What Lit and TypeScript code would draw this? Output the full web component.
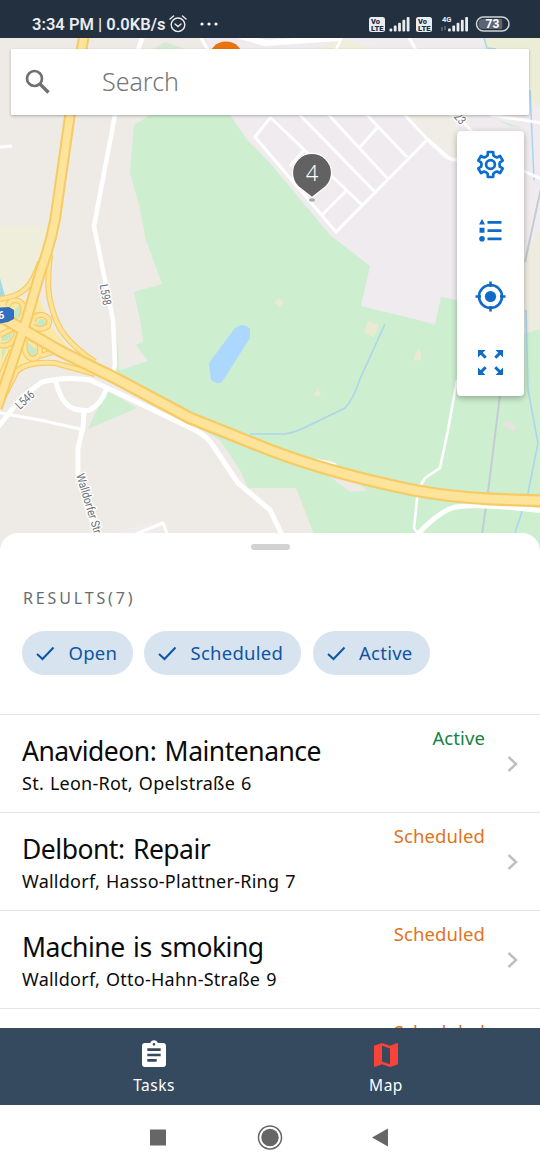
import { LitElement, html, css, svg } from "lit";
import { customElement, property } from "lit/decorators.js";

@customElement("map-canvas")
class MapCanvas extends LitElement {
  static styles = css`
    :host { display: block; }
    .map { display: block; width: 540px; height: 512px; }
    .lbl { font: 12px Roboto, sans-serif; fill: #6d7078; stroke: #fff; stroke-width: 3px; paint-order: stroke; stroke-linejoin: round; }
    .shield { font: bold 11px Roboto, sans-serif; fill: #fff; }
    .num { font: 300 22px "Noto Sans", sans-serif; fill: #fff; }
    .case { stroke: #f6cb64; fill: none; }
    .core { stroke: #fee39a; fill: none; }
    .road { stroke: #fff; fill: none; stroke-linejoin: round; }
    .water { stroke: #acd6ee; fill: none; stroke-width: 1.6px; }
  `;
  render() {
    const ramps = "M50 255C47 285 48 296 52 308C57 328 66 342 95 362 M40 262C32 286 24 296 0 299 M8 306Q10 298 19 301Q27 306 21 318 M0 345Q10 348 16 336 Q18 326 8 324 M33 322Q34 314 43 315Q52 318 48 326Q40 332 32 326 M25 340Q23 356 32 359Q43 358 39 343L30 338 M0 404L17 371Q28 361 55 363L95 374 M40 356L60 350 M0 335L14 328 M0 378L12 350";
    const a5 = "M84 36L70 115L55 220Q50 246 41 270L25 325L-3 408";
    const a6 = "M-5 313L17 326L60 351L117 379L190 418L270 450Q330 473 413 490Q450 497 490 499L545 501";
    return html`<svg class="map" viewBox="0 38 540 512">
      ${svg`
      <rect y="38" width="540" height="512" fill="#eeebe7"/>
      <path d="M0 226H50L38 280L20 300H0Z" fill="#eeeedb"/>
      <path d="M0 278L5 296H0Z" fill="#a5d8e4"/>
      <path d="M207 38H540V330L450 330L361 306L370 266L330 240L230 115Z" fill="#f0ebef"/>
      <path d="M403 113L427 139L447 159H458V115Z" fill="#efede5"/>
      <path d="M484 38H540V108L500 70L484 50Z" fill="#ebedd7"/>
      <path d="M153 49L165 42L185 49Z M320 49Q335 38 362 49Z" fill="#d6ead1"/>
      <path d="M320 49Q335 39 348 40L375 49Z" fill="#eeeedb"/>
      <path d="M150 115H230L247 140L270 163L330 235L370 266L361 306L435 324L441 297L457 300L540 330V550H320L296 488H248L240 470L220 440L190 422L118 375L117 371L148 361L136 345L143 342L141 325L134 292L162 284L146 240L139 205L130 173L134 125Z" fill="#cdeecf"/>
      <path d="M106 390L137 408L88 429Z M118 340L119 372H115Z M497 120L520 127L510 126Z" fill="#cdeecf"/>
      <path d="M540 229L524 255V334L540 329Z" fill="#eeebdf"/>
      <path d="M235 328Q243 322 250 329V338L222 382Q217 385 211 380L209 363Z" fill="#acd7ff"/>
      <path d="M274 302L279 298L284 302L280 308Z M365 330L368 321L379 325L374 337L364 333Z M414 358L418 348L421 352V360L415 361Z M314 396L318 387L321 396Z" fill="#e9ead1"/>
      <path d="M502 425L506 421L517 426L513 431Z" fill="#e8e3e0"/>
      <path d="M310 460L331 460L343 470L368 491L350 492L338 483Z" fill="#ede9e5"/>
      <path d="M418 320L436 323L434 325Z" fill="#ede6e8"/>
      <path d="M120 530L160 521L166 550H110Z" fill="#f0ebef"/>
      <path d="M250 434H285Q297 432 310 425L345 408Q353 400 360 379L385 324" class="water"/>
      <path d="M526 310L528 390L538 443L528 493L515 533" class="water"/>
      <path d="M484 38L487 48L496 49M534 180L530 90" class="water"/>
      <path d="M541 188L525 262M500 395L488 492L482 535" stroke="#c4cbd3" stroke-width="2" fill="none"/>
      <path class="road" stroke-width="3" d="M270 118L255 137L336 232L427 140M270 117L362 205M298 113L375 192M327 113L387 178M365 113L407 157M403 113L427 139M322 215L347 190M360 147L377 128M290 166L304 150M524 171L541 179M490 115L541 123M455 113L475 135"/>
      <path class="road" stroke-width="4" d="M427 139L447 157Q451 160 460 160"/>
      <path class="road" stroke-width="3" d="M200 36L208 50M408 36L416 50M342 36L336 50M0 147L12 146M0 413L40 420L80 429M136 534L163 523L168 536"/>
      <path class="road" stroke-width="6" d="M240 36L265 43Q310 40 340 38"/>
      <path class="road" stroke-width="2.6" d="M457 380L448 430L440 468L425 478L418 490L414 528L418 534"/>
      <path class="road" stroke-width="4.5" d="M143 36L115 115L94 226L113 320L115 365L111 380"/>
      <path class="road" stroke-width="5" d="M-2 427L22 397L42 382Q65 376 90 380L120 394L195 430Q205 435 212 444L238 483L270 510L282 535M56 382Q60 400 70 407Q80 412 90 410Q102 403 106 390M84 411L83 427L78 448L78 474L98 540"/>
      <path class="road" stroke-width="5" d="M416 536Q440 510 456 507Q480 503 545 511M315 461L336 466"/>
      <path d="M0 300L40 300L52 328L70 350L28 360L0 400Z" fill="#fbe8a5"/>
      <path d="M13 313Q18 304 22 306L20 318L12 321Z M1 333L12 331Q14 341 2 341Z M36 325Q38 318 43 319Q49 322 44 326L39 328Z M27 342L37 350Q35 359 30 357Q25 352 27 342Z M42 351L49 355L40 359Z M21 366L26 362L19 369Z M2 350L6 348L2 360Z" fill="#c5e8c6"/>
      <path class="case" stroke-width="6" d=${ramps}/><path class="core" stroke-width="3.600" d=${ramps}/>
      <path class="case" stroke-width="11.5" d=${a5}/><path class="case" stroke-width="13" d=${a6}/>
      <path class="core" stroke-width="7.500" d=${a5}/><path class="core" stroke-width="8.500" d=${a6}/>
      <path d="M-8 308L9 307L14 310V319L8 322L-8 325Z" fill="#3270bd"/>
      <text class="shield" x="-2" y="319">6</text>
      <text class="lbl" textLength="21" lengthAdjust="spacingAndGlyphs" transform="translate(99.5 285) rotate(80)">L598</text>
      <text class="lbl" textLength="21" lengthAdjust="spacingAndGlyphs" transform="translate(20 410) rotate(-43)">L546</text>
      <text class="lbl" textLength="62" lengthAdjust="spacingAndGlyphs" transform="translate(76 475) rotate(73)">Walldorfer Str</text>
      <text class="lbl" textLength="22" lengthAdjust="spacingAndGlyphs" transform="translate(446 109) rotate(48)">L723</text>
      <circle cx="226" cy="59" r="17.5" fill="#e9730c"/>
      <ellipse cx="312" cy="200" rx="3" ry="1.7" fill="#aaa"/>
      <path d="M312 197.500L298 186.500A19.500 19.500 0 1 1 326 186.500Z" fill="#626262" stroke="#fff" stroke-width="1.2"/>
      <text class="num" x="312" y="181" text-anchor="middle">4</text>
      `}
    </svg>`;
  }
}

@customElement("status-bar")
class StatusBar extends LitElement {
  static styles = css`
    :host { display: flex; height: 38px; box-sizing: border-box; padding: 10px 30px 0 32px; background: #23303f; color: #e9edf1; justify-content: space-between; font-family: Roboto, sans-serif; }
    .left { display: flex; }
    .time { font-size: 16.500px; font-weight: 600; line-height: 29px; width: 135px; white-space: nowrap; letter-spacing: 0; }
    .alarm { margin: 5px 0 0 2px; width: 18px; height: 18px; }
    .dots { margin: 12px 0 0 13px; width: 19px; height: 4px; }
    .signal { width: 144px; height: 28px; }
    .tiny { font: 900 7.500px Roboto, sans-serif; fill: #23303f; }
    .net { font: bold 7.500px Roboto, sans-serif; fill: #e9edf1; }
    .pct { font: bold 12px Roboto, sans-serif; fill: #fff; }
  `;
  bars(x: number) {
    return [0, 1, 2, 3, 4].map(i => svg`<rect x=${x + i * 4.3} y=${18.5 - i * 2.9} width="2.800" height=${3 + i * 2.9} rx="1" fill="#e9edf1"/>`);
  }
  volte(x: number) {
    return svg`<rect x=${x} y="7" width="16" height="15" rx="2.500" fill="#e9edf1"/>
      <text class="tiny" x=${x + 2} y="14" textLength="9" lengthAdjust="spacingAndGlyphs">Vo</text>
      <text class="tiny" x=${x + 2} y="20.800" textLength="12.500" lengthAdjust="spacingAndGlyphs">LTE</text>`;
  }
  render() {
    return html`<div class="left"><span class="time">3:34 PM | 0.0KB/s</span>
      <svg class="alarm" viewBox="0 0 18 18" fill="none" stroke="#e9edf1" stroke-width="1.4" stroke-linecap="round"><circle cx="9" cy="9.800" r="6.800"/><path d="M6 9L9 11.500L12 9M1 4L4.500 1M17 4L13.500 1"/></svg>
      <svg class="dots" viewBox="0 0 19 4" fill="#fff"><circle cx="2" cy="2" r="1.600"/><circle cx="9" cy="2" r="1.600"/><circle cx="16" cy="2" r="1.600"/></svg></div>
      <svg class="signal" viewBox="0 0 144 28">${this.volte(3)}${this.bars(23.5)}${this.volte(50)}${this.bars(82)}
        <text class="net" x="76" y="12">4G</text><path d="M76 17V21M79 20V16" stroke="#7e8994" stroke-width="1"/>
        <rect x="110.500" y="7" width="32.500" height="14" rx="7" fill="#23303f" stroke="#cfd4da" stroke-width="1.500"/><path d="M117 9H136Q137 14 136 19H117Q112.500 19 112.500 14T117 9Z" fill="#5c6673"/>
        <text class="pct" x="126.500" y="18.300" text-anchor="middle">73</text></svg>`;
  }
}

@customElement("filter-chip")
class FilterChip extends LitElement {
  @property() label = "";
  @property({ type: Number }) w = 0;
  static styles = css`
    .chip { display: flex; align-items: center; box-sizing: border-box; height: 44px; border-radius: 22px; background: #d7e3ef; color: #0f55a5; padding-left: 14px; gap: 13.500px; font: 18.500px/44px "Noto Sans", sans-serif; letter-spacing: 0.25px; }
    .tick { width: 19px; height: 15px; }
  `;
  render() {
    return html`<div class="chip" style="width:${this.w}px"><svg class="tick" viewBox="0 0 19 15" fill="none" stroke="#0f55a5" stroke-width="2"><path d="M1 8L6.500 13L17.500 1.500"/></svg><span>${this.label}</span></div>`;
  }
}

@customElement("task-row")
class TaskRow extends LitElement {
  @property() name = "";
  @property() place = "";
  @property() status = "";
  static styles = css`
    :host { display: block; font-family: "Noto Sans", sans-serif; color: #0b0b0b; }
    .row { display: flex; justify-content: space-between; box-sizing: border-box; height: 98px; border-top: 1px solid #e5e5e5; padding: 0 21px 0 22px; }
    .name { font-size: 26.500px; line-height: 34px; margin-top: 19px; white-space: nowrap; letter-spacing: -0.500px; word-spacing: 2px; }
    .place { font-size: 18px; line-height: 24px; margin-top: 3px; white-space: nowrap; letter-spacing: 0.250px; word-spacing: 1px; }
    .side { display: flex; }
    .status { font-size: 18.500px; line-height: 24px; margin-top: 10.500px; letter-spacing: 0.1px; color: #e0741b; }
    .active { color: #168244; }
    .arrow { width: 12px; height: 18px; margin: 40px 0 0 22px; }
  `;
  render() {
    return html`<div class="row"><div><div class="name">${this.name}</div><div class="place">${this.place}</div></div>
      <div class="side"><span class="status ${this.status === "Active" ? "active" : ""}">${this.status}</span>
      <svg class="arrow" viewBox="0 0 12 18" fill="none" stroke="#bfbfbf" stroke-width="2.500"><path d="M1.500 2L9 9L1.500 16"/></svg></div></div>`;
  }
}

@customElement("app-root")
class AppRoot extends LitElement {
  static styles = css`
    :host { display: flex; flex-direction: column; width: 540px; height: 1170px; overflow: hidden; background: #fff; font-family: Roboto, sans-serif; }
    .stage { position: relative; height: 495px; flex: none; }
    .search { position: absolute; left: 11px; top: 11px; width: 518px; height: 66px; background: #fff; box-shadow: 0 1px 3px rgba(0,0,0,.28); display: flex; align-items: center; box-sizing: border-box; padding-left: 13px; gap: 50px; border-radius: 1px; }
    .glass { width: 28px; height: 28px; }
    .hint { font: 300 25px/34px "Noto Sans", sans-serif; color: #757575; letter-spacing: 0; padding-bottom: 2px; }
    .tools { position: absolute; left: 457px; top: 93px; width: 67px; height: 265px; background: #fff; border-radius: 4px; box-shadow: 0 2px 6px rgba(0,0,0,.3); display: flex; flex-direction: column; align-items: center; }
    .tool { width: 32px; height: 32px; margin: 17px 0; }
    .sheet { position: relative; flex: none; height: 495px; background: #fff; border-radius: 18px 18px 0 0; overflow: hidden; }
    .grip { width: 39px; height: 6px; border-radius: 3px; background: #d2d2d2; margin: 11px auto 0; }
    .heading { font-family: "Noto Sans", sans-serif; font-size: 16px; line-height: 20px; letter-spacing: 2.850px; color: #6a6d70; margin: 38px 0 0 23px; }
    .chips { display: flex; gap: 11.500px; margin: 23px 0 39px 22px; }
    .tabs { flex: none; height: 77px; background: #354a5f; display: flex; padding: 0 38px; color: #fff; }
    .tab { flex: 1; display: flex; flex-direction: column; align-items: center; font: 15.500px/20px "Noto Sans", sans-serif; letter-spacing: .5px; padding-top: 11px; }
    .tabicon { width: 32px; height: 32px; margin-bottom: 4px; }
    .system { height: 65px; display: flex; }
    .sys { width: 540px; height: 65px; }
  `;
  gear() {
    const pts: string[] = [];
    for (let i = 0; i < 6; i++) {
      const at = (deg: number, r: number) => {
        const a = ((i * 60 + deg - 90) * Math.PI) / 180;
        return `${(15.5 + r * Math.cos(a)).toFixed(2)} ${(16.5 + r * Math.sin(a)).toFixed(2)}`;
      };
      pts.push(at(-17, 9.6), at(-12, 12.8), at(12, 12.8), at(17, 9.6), at(30, 9));
    }
    return svg`<path d="M${pts.join("L")}Z"/><circle cx="15.500" cy="16.500" r="4.400"/>`;
  }
  render() {
    return html`<status-bar></status-bar>
      <div class="stage"><map-canvas></map-canvas>
        <div class="search"><svg class="glass" viewBox="0 0 28 28" fill="none" stroke="#707070"><circle cx="10.500" cy="10.500" r="7.500" stroke-width="2.700"/><path d="M16 16L24.500 24.500" stroke-width="3.400"/></svg><span class="hint">Search</span></div>
        <div class="tools">
          <svg class="tool" viewBox="0 0 32 32" fill="none" stroke="#0a6ed1" stroke-width="2.700" stroke-linejoin="round">${this.gear()}</svg>
          <svg class="tool" viewBox="0 0 32 32" fill="#0f6bc8"><path d="M7 5L10 10.500H4ZM4.500 13.700H9.500V18.700H4.500ZM12.500 7H26.500V9.800H12.500ZM12.500 15.200H26.500V18H12.500ZM12.500 23.500H26.500V26.300H12.500Z"/><circle cx="7" cy="24.800" r="2.800"/></svg>
          <svg class="tool" viewBox="0 0 32 32" fill="none" stroke="#0f6bc8" stroke-width="2.600"><circle cx="15.500" cy="16.500" r="11.500"/><circle cx="15.500" cy="16.500" r="5.600" fill="#0f6bc8" stroke="none"/><path d="M15.500 1.500V7M15.500 26V31.500M.5 16.500H6M25 16.500H30.500"/></svg>
          <svg class="tool" viewBox="0 0 32 32" fill="#0f6bc8" stroke="#0f6bc8"><path stroke="none" d="M3 4H10.500L3 11.500ZM28 4V11.500L20.500 4ZM3 29V21.500L10.500 29ZM28 29H20.500L28 21.500Z"/><path d="M5.500 6.500L10.700 11.700M25.500 6.500L20.300 11.700M5.500 26.500L10.700 21.300M25.500 26.500L20.300 21.300" stroke-width="3"/></svg>
        </div>
      </div>
      <div class="sheet"><div class="grip"></div><div class="heading">RESULTS(7)</div>
        <div class="chips"><filter-chip label="Open" w="110.500"></filter-chip><filter-chip label="Scheduled" w="157"></filter-chip><filter-chip label="Active" w="117"></filter-chip></div>
        <task-row name="Anavideon: Maintenance" place="St. Leon-Rot, Opelstraße 6" status="Active"></task-row>
        <task-row name="Delbont: Repair" place="Walldorf, Hasso-Plattner-Ring 7" status="Scheduled"></task-row>
        <task-row name="Machine is smoking" place="Walldorf, Otto-Hahn-Straße 9" status="Scheduled"></task-row>
        <task-row status="Scheduled"></task-row>
      </div>
      <div class="tabs">
        <div class="tab"><svg class="tabicon" viewBox="0 0 24 24" fill="#fff"><path d="M19 3h-4.180C14.400 1.840 13.300 1 12 1s-2.400.84-2.820 2H5c-1.100 0-2 .9-2 2v14c0 1.100.9 2 2 2h14c1.100 0 2-.9 2-2V5c0-1.100-.9-2-2-2zm-7 0c.55 0 1 .45 1 1s-.45 1-1 1-1-.45-1-1 .45-1 1-1zm2 14H7v-2h7v2zm3-4H7v-2h10v2zm0-4H7V7h10v2z"/></svg>Tasks</div>
        <div class="tab"><svg class="tabicon" viewBox="0 0 24 24" fill="#fa4238"><path d="M20.500 3l-.16.03L15 5.100 9 3 3.360 4.900c-.21.07-.36.25-.36.48V20.500c0 .28.22.5.5.5l.16-.03L9 18.900l6 2.100 5.640-1.900c.21-.07.36-.25.36-.48V3.500c0-.28-.22-.5-.5-.5zM15 19l-6-2.110V5l6 2.110V19z"/></svg>Map</div>
      </div>
      <div class="system"><svg class="sys" viewBox="0 0 540 65" fill="#666"><rect x="150" y="24.500" width="16" height="16"/><circle cx="270" cy="32.500" r="11.500" fill="none" stroke="#666" stroke-width="1.500"/><circle cx="270" cy="32.500" r="8.700"/><path d="M372 32.500L388 23.500V41.500Z"/></svg></div>`;
  }
}
